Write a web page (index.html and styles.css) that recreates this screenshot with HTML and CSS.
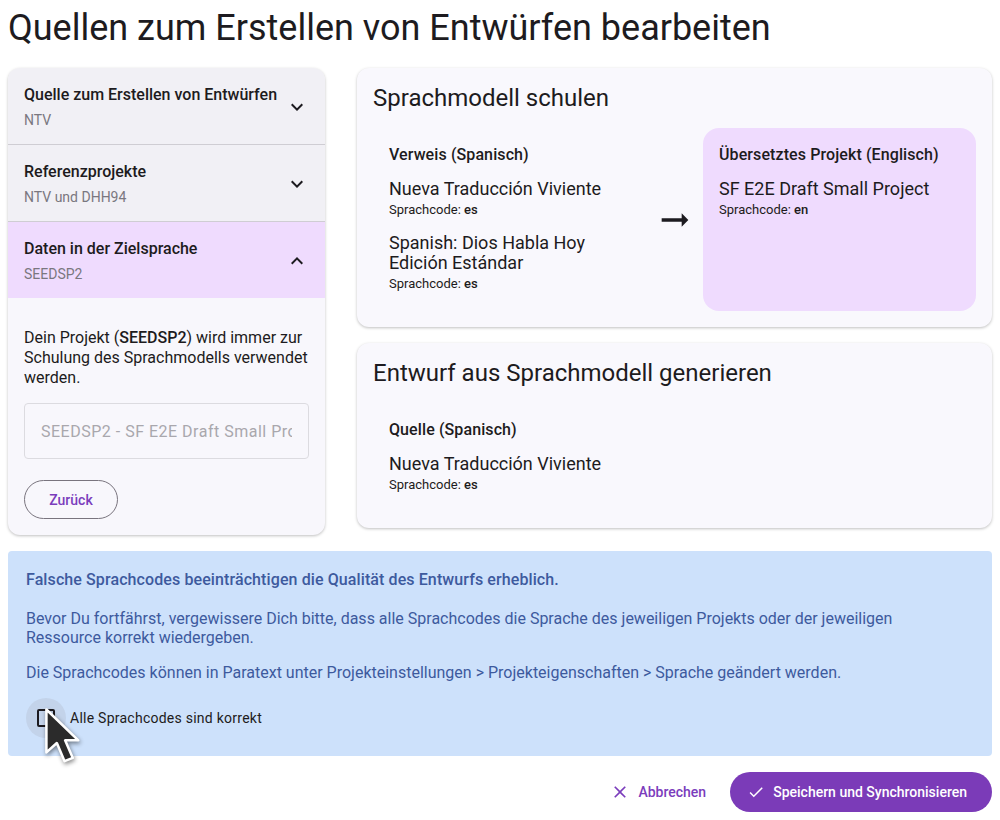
FILE: index.html
```html
<!DOCTYPE html>
<html lang="de">
<head>
<meta charset="utf-8">
<link rel="stylesheet" href="styles.css">
</head>
<body>
<h1 class="page-title">Quellen zum Erstellen von Entwürfen bearbeiten</h1>
<div class="layout">
  <div class="steps">
    <div class="step-header">
      <div class="step-text">
        <div class="step-title">Quelle zum Erstellen von Entwürfen</div>
        <div class="step-sub">NTV</div>
      </div>
      <svg class="chev" viewBox="0 0 24 24"><path d="M16.59 8.59L12 13.17 7.41 8.59 6 10l6 6 6-6z"/></svg>
    </div>
    <div class="step-header">
      <div class="step-text">
        <div class="step-title">Referenzprojekte</div>
        <div class="step-sub">NTV und DHH94</div>
      </div>
      <svg class="chev" viewBox="0 0 24 24"><path d="M16.59 8.59L12 13.17 7.41 8.59 6 10l6 6 6-6z"/></svg>
    </div>
    <div class="step-header active">
      <div class="step-text">
        <div class="step-title">Daten in der Zielsprache</div>
        <div class="step-sub">SEEDSP2</div>
      </div>
      <svg class="chev" viewBox="0 0 24 24"><path d="M7.41 15.41L12 10.83l4.59 4.58L18 14l-6-6-6 6z"/></svg>
    </div>
    <div class="step-body">
      <p class="step-desc">Dein Projekt (<strong>SEEDSP2</strong>) wird immer zur Schulung des Sprachmodells verwendet werden.</p>
      <div class="field"><span class="field-text">SEEDSP2 - SF E2E Draft Small Project</span></div>
      <button class="outlined">Zurück</button>
    </div>
  </div>
  <div class="cards">
    <div class="card">
      <h2 class="card-title">Sprachmodell schulen</h2>
      <div class="train-row">
        <div class="box">
          <div class="box-head">Verweis (Spanisch)</div>
          <div class="proj">
            <div class="proj-name">Nueva Traducción Viviente</div>
            <div class="proj-code">Sprachcode: <b>es</b></div>
          </div>
          <div class="proj">
            <div class="proj-name">Spanish: Dios Habla Hoy<br>Edición Estándar</div>
            <div class="proj-code">Sprachcode: <b>es</b></div>
          </div>
        </div>
        <div class="arrow">
          <svg viewBox="0 0 24 24"><path d="M16.01 11H4v2h12.01v3L20 12l-3.99-4z"/></svg>
        </div>
        <div class="box target">
          <div class="box-head">Übersetztes Projekt (Englisch)</div>
          <div class="proj">
            <div class="proj-name">SF E2E Draft Small Project</div>
            <div class="proj-code">Sprachcode: <b>en</b></div>
          </div>
        </div>
      </div>
    </div>
    <div class="card">
      <h2 class="card-title">Entwurf aus Sprachmodell generieren</h2>
      <div class="box">
        <div class="box-head">Quelle (Spanisch)</div>
        <div class="proj">
          <div class="proj-name">Nueva Traducción Viviente</div>
          <div class="proj-code">Sprachcode: <b>es</b></div>
        </div>
      </div>
    </div>
  </div>
</div>
<div class="notice">
  <p class="notice-strong">Falsche Sprachcodes beeinträchtigen die Qualität des Entwurfs erheblich.</p>
  <p>Bevor Du fortfährst, vergewissere Dich bitte, dass alle Sprachcodes die Sprache des jeweiligen Projekts oder der jeweiligen Ressource korrekt wiedergeben.</p>
  <p>Die Sprachcodes können in Paratext unter Projekteinstellungen &gt; Projekteigenschaften &gt; Sprache geändert werden.</p>
  <label class="check-row">
    <span class="check-ripple"><span class="check-box"></span></span>
    <span class="check-label">Alle Sprachcodes sind korrekt</span>
    <svg class="cursor" viewBox="0 0 40 56" width="44" height="62">
      <path d="M4 3 L4 42 L13.5 33.5 L20.5 50 L28 47 L21 31 L33 31 Z" fill="#2b2b2b" stroke="#fff" stroke-width="2.3" stroke-linejoin="round"/>
    </svg>
  </label>
</div>
<div class="actions">
  <button class="text-btn">
    <svg viewBox="0 0 24 24"><path d="M19 6.41L17.59 5 12 10.59 6.41 5 5 6.41 10.59 12 5 17.59 6.41 19 12 13.41 17.59 19 19 17.59 13.41 12z"/></svg>
    Abbrechen
  </button>
  <button class="filled">
    <svg viewBox="0 0 24 24"><path d="M9 16.17L4.83 12l-1.42 1.41L9 19 21 7l-1.41-1.41z"/></svg>
    Speichern und Synchronisieren
  </button>
</div>
</body>
</html>
```
FILE: styles.css
```css
* { box-sizing: border-box; }
body {
  margin: 0;
  padding: 0 8px;
  font-family: Roboto, "Noto Sans", sans-serif;
  color: #1d1b20;
  background: #fff;
}
.page-title {
  margin: 0;
  padding-top: 6px;
  font-size: 36px;
  font-weight: 400;
  line-height: 44px;
  height: 68px;
}
.layout {
  display: grid;
  grid-template-columns: 317px 1fr;
  gap: 32px;
  align-items: start;
}
.steps {
  border-radius: 12px;
  overflow: hidden;
  background: #f8f7fc;
  box-shadow: 0 1px 3px rgba(0,0,0,0.25);
}
.step-header {
  display: flex;
  align-items: center;
  justify-content: space-between;
  padding: 14px 16px 13px;
  height: 77px;
  background: #f1f0f5;
  border-bottom: 1px solid #cfcdd3;
}
.step-header.active {
  background: #efdbfe;
  border-bottom: none;
  height: 76px;
}
.step-title {
  font-size: 16px;
  font-weight: 500;
  line-height: 22px;
}
.step-sub {
  font-size: 14px;
  color: #7a777f;
  line-height: 20px;
  margin-top: 4px;
}
.chev { width: 24px; height: 24px; fill: #1d1b20; }
.step-body {
  padding: 30px 16px 16px;
}
.step-desc {
  margin: 0 0 15px;
  font-size: 16px;
  line-height: 20px;
}
.step-desc strong { font-weight: 500; }
.field {
  height: 56px;
  border: 1px solid #dcdbe0;
  border-radius: 4px;
  padding: 0 16px;
  display: flex;
  align-items: center;
}
.field-text {
  display: block;
  width: 100%;
  overflow: hidden;
  white-space: nowrap;
  font-size: 16px;
  letter-spacing: 0.5px;
  color: #a9a7ad;
}
.outlined {
  margin-top: 21px;
  height: 39px;
  width: 94px;
  border: 1px solid #79747e;
  border-radius: 20px;
  background: transparent;
  color: #7b3dbc;
  font-family: inherit;
  font-size: 14px;
  font-weight: 500;
}
.cards {
  display: flex;
  flex-direction: column;
  gap: 16px;
}
.card {
  background: #f9f8fd;
  border-radius: 12px;
  box-shadow: 0 1px 3px rgba(0,0,0,0.25);
  padding: 16px;
}
.card-title {
  margin: 0 0 16px;
  font-size: 24px;
  font-weight: 400;
  line-height: 28px;
}
.train-row {
  display: grid;
  grid-template-columns: 1fr 57px 273px;
  align-items: stretch;
}
.box {
  padding: 16px;
  border-radius: 16px;
}
.box.target {
  background: #efdbfe;
  min-height: 182px;
}
.box-head {
  font-size: 16px;
  font-weight: 500;
  letter-spacing: 0.1px;
  line-height: 22px;
  margin-bottom: 13px;
}
.proj + .proj { margin-top: 12px; }
.proj-name {
  font-size: 18px;
  line-height: 20px;
}
.proj-code {
  font-size: 13px;
  line-height: 22px;
}
.proj-code b { font-weight: 500; }
.arrow {
  display: flex;
  align-items: center;
  justify-content: center;
}
.arrow svg { width: 40px; height: 40px; fill: #1d1b20; }
.notice {
  margin-top: 16px;
  background: #cde1fb;
  border-radius: 4px;
  padding: 19px 60px 18px 18px;
  color: #3d5a9e;
  font-size: 16px;
  line-height: 19px;
}
.notice p { margin: 0 0 16px; }
.notice .notice-strong {
  font-weight: 500;
  font-size: 16px;
  letter-spacing: 0.1px;
  margin-bottom: 19px;
  line-height: 20px;
}
.check-row {
  position: relative;
  display: flex;
  align-items: center;
  gap: 4px;
  height: 40px;
  color: #1d1b20;
  font-size: 14px;
  letter-spacing: 0.25px;
}
.check-ripple {
  width: 40px;
  height: 40px;
  border-radius: 50%;
  background: #c3d3ea;
  display: flex;
  align-items: center;
  justify-content: center;
}
.check-box {
  width: 18px;
  height: 18px;
  border: 2px solid #1d1b20;
  border-radius: 2px;
}
.cursor {
  position: absolute;
  left: 16px;
  top: 8px;
  filter: drop-shadow(1px 2px 2px rgba(0,0,0,0.45));
}
.actions {
  display: flex;
  justify-content: flex-end;
  align-items: center;
  gap: 12px;
  margin-top: 16px;
}
.actions button {
  font-family: inherit;
  font-size: 14px;
  font-weight: 500;
  height: 40px;
  border: none;
  display: flex;
  align-items: center;
  gap: 8px;
  cursor: pointer;
}
.actions svg { width: 18px; height: 18px; }
.text-btn {
  background: transparent;
  color: #7b3dbc;
  padding: 0 12px;
}
.text-btn svg { width: 20px; height: 20px; fill: #7b3dbc; }
.filled {
  background: #7b3bb8;
  color: #fff;
  border-radius: 20px;
  padding: 0 25px 0 17px;
}
.filled svg { fill: #fff; }
```
